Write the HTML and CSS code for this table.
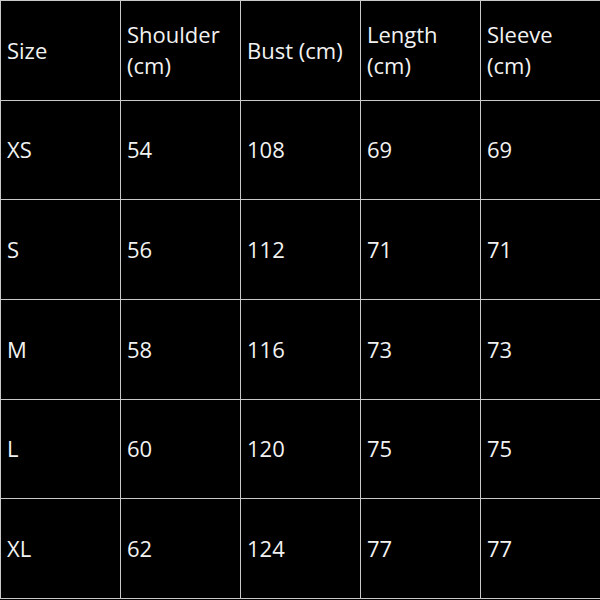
FILE: index.html
```html
<!DOCTYPE html>
<html lang="en">
<head>
<meta charset="utf-8">
<title>Size chart</title>
<link rel="stylesheet" href="styles.css">
</head>
<body>
<table class="size-table">
  <tr><td>Size</td><td>Shoulder (cm)</td><td>Bust (cm)</td><td>Length (cm)</td><td>Sleeve (cm)</td></tr>
  <tr><td>XS</td><td>54</td><td>108</td><td>69</td><td>69</td></tr>
  <tr><td>S</td><td>56</td><td>112</td><td>71</td><td>71</td></tr>
  <tr><td>M</td><td>58</td><td>116</td><td>73</td><td>73</td></tr>
  <tr><td>L</td><td>60</td><td>120</td><td>75</td><td>75</td></tr>
  <tr><td>XL</td><td>62</td><td>124</td><td>77</td><td>77</td></tr>
</table>
</body>
</html>
```
FILE: styles.css
```css
html, body {
  margin: 0;
  padding: 0;
  background: #000;
}
.size-table {
  width: 600px;
  height: 599px;
  border-collapse: collapse;
  table-layout: fixed;
  font-family: "Open Sans", "DejaVu Sans", sans-serif;
  font-size: 22px;
  line-height: 31px;
  color: #f2f2f2;
}
.size-table td {
  width: 120px;
  height: 99px;
  padding: 0 6px;
  border: 1.5px solid #c9c9c9;
  vertical-align: middle;
  text-align: left;
  box-sizing: border-box;
}
```
